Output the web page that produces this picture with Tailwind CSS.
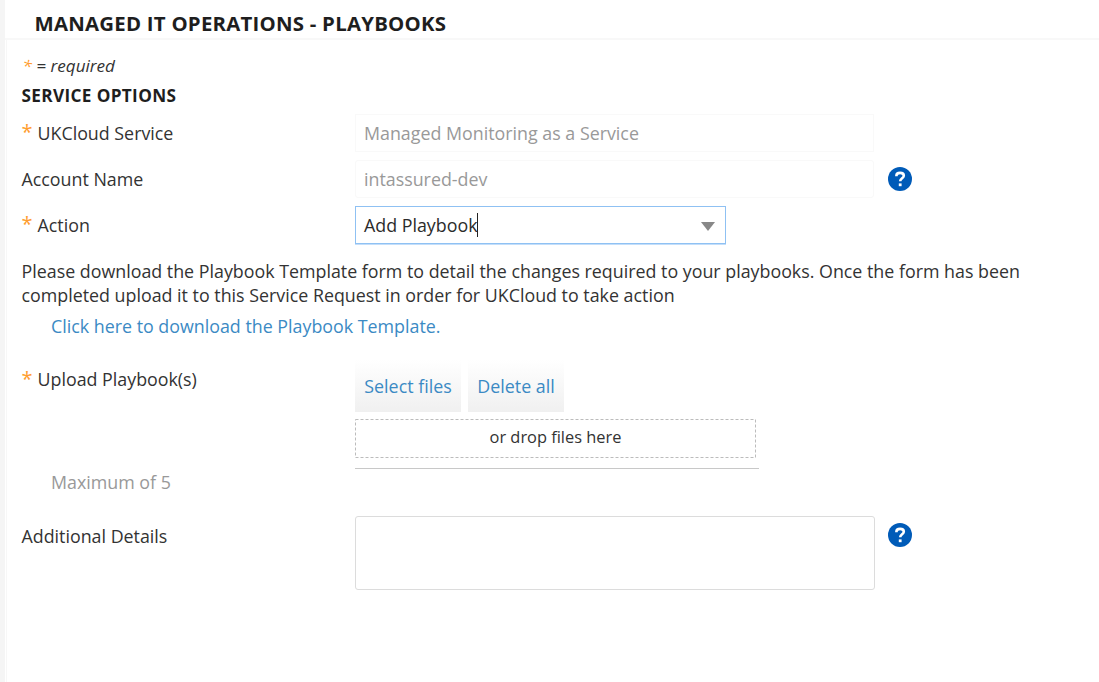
<!DOCTYPE html>
<html lang="en">
<head>
<meta charset="utf-8">
<title>Managed IT Operations - Playbooks</title>
<script src="https://cdn.jsdelivr.net/npm/@tailwindcss/browser@4"></script>
</head>
<body class="flex h-[682px] w-[1099px] overflow-hidden bg-white font-['Open_Sans',sans-serif] text-[17.83px] leading-6 text-[#333]">
<div class="w-[5px] shrink-0 bg-[#f5f5f5]"></div>
<main class="flex flex-1 flex-col">
  <h1 class="h-10 shrink-0 border-b-2 border-[#f8f8f8] pt-[10px] pl-[29.5px] text-[20.4px] leading-[26px] font-bold tracking-[0.23px] whitespace-nowrap text-[#1e1e1e]">MANAGED IT OPERATIONS - PLAYBOOKS</h1>
  <div class="ml-px flex-1 border-l border-[#f7f7f7] pl-[14.5px]">
    <p class="h-[43px] pt-[14px] pl-px text-[17.1px] italic"><span class="text-[#ff9d2e]">*</span> = required</p>
    <h2 class="h-[30px] text-[17.2px] leading-[25px] font-bold tracking-[0.35px] text-[#1e1e1e]">SERVICE OPTIONS</h2>
    <div class="flex h-[47px]">
      <label class="flex w-[333.5px] pt-2"><span class="-mt-px w-4 text-[20px] text-[#ff9d2e]">*</span><span>UKCloud Service</span></label>
      <div class="mt-px h-[38px] w-[519px] border border-[#f9f9f9] pt-[6px] pl-2 text-[#999]">Managed Monitoring as a Service</div>
    </div>
    <div class="flex h-[46px]">
      <label class="w-[333.5px] pt-[7px]">Account Name</label>
      <div class="h-[38px] w-[519px] rounded-[3px] border border-[#f9f9f9] pt-[6px] pl-2 text-[#999]">intassured-dev</div>
      <svg class="mt-[7px] ml-[14px] h-6 w-6" viewBox="0 0 24 24"><circle cx="12" cy="12" r="12" fill="#005bb8"/><path d="M8.4 9.2V8.8C8.4 6.9 9.9 5.9 12.1 5.9s3.7 1.1 3.7 2.8c0 2.5-3.6 2.6-3.6 5.5" fill="none" stroke="#fff" stroke-width="2.6"/><path d="M10.8 16.4h2.8v2.8h-2.8z" fill="#fff"/></svg>
    </div>
    <div class="flex h-[53px]">
      <label class="flex w-[333.5px] pt-[7px]"><span class="-mt-px w-4 text-[20px] text-[#ff9d2e]">*</span><span>Action</span></label>
      <div class="flex h-[38px] w-[371px] border border-[#8fc1f3] pt-[6px] pr-[10.5px] pl-2 text-[#2b2b2b] shadow-[0_1px_0_#c3defa]"><span>Add Playbook</span><span class="-ml-px h-6 w-px bg-[#222]"></span><svg class="mt-[9px] ml-auto h-[9px] w-[14px]" viewBox="0 0 14 9"><path d="M0 0h14L7 9z" fill="#888"/></svg></div>
    </div>
    <p class="whitespace-nowrap">Please download the Playbook Template form to detail the changes required to your playbooks. Once the form has been<br>completed upload it to this Service Request in order for UKCloud to take action</p>
    <a class="mt-[7px] block h-[47px] pl-[29.5px] text-[#3b8ac4]">Click here to download the Playbook Template.</a>
    <div class="flex h-[109px]">
      <label class="flex w-[333.5px] pt-[6px]"><span class="w-4 text-[20px] text-[#ff9d2e]">*</span><span>Upload Playbook(s)</span></label>
      <div class="w-[404px]">
        <div class="-mt-px flex h-[58px] gap-[7px] text-[#3b8ac4]">
          <button class="h-[52px] w-[106px] bg-linear-to-b from-white to-[#f0f0f0] whitespace-nowrap">Select files</button>
          <button class="h-[52px] w-[96px] bg-linear-to-b from-white to-[#f0f0f0] whitespace-nowrap">Delete all</button>
        </div>
        <svg class="h-[40px] w-[402px]" viewBox="0 0 402 40"><rect x=".5" y="1.5" width="400" height="38" fill="none" stroke="#bcbcbc" stroke-dasharray="3 2"/><text x="200.5" y="25" text-anchor="middle" font-size="16.4" fill="#333">or drop files here</text></svg>
        <div class="mt-[10px] border-t border-[#c8c8c8]"></div>
      </div>
    </div>
    <p class="h-[46px] pl-[29.5px] text-[#999]">Maximum of 5</p>
    <div class="flex">
      <label class="w-[333.5px] pt-2">Additional Details</label>
      <div class="h-[74px] w-[519.5px] rounded-[3px] border border-[#dcdcdc]"></div>
      <svg class="mt-[7px] ml-[13.5px] h-6 w-6" viewBox="0 0 24 24"><circle cx="12" cy="12" r="12" fill="#005bb8"/><path d="M8.4 9.2V8.8C8.4 6.9 9.9 5.9 12.1 5.9s3.7 1.1 3.7 2.8c0 2.5-3.6 2.6-3.6 5.5" fill="none" stroke="#fff" stroke-width="2.6"/><path d="M10.8 16.4h2.8v2.8h-2.8z" fill="#fff"/></svg>
    </div>
  </div>
</main>
</body>
</html>
